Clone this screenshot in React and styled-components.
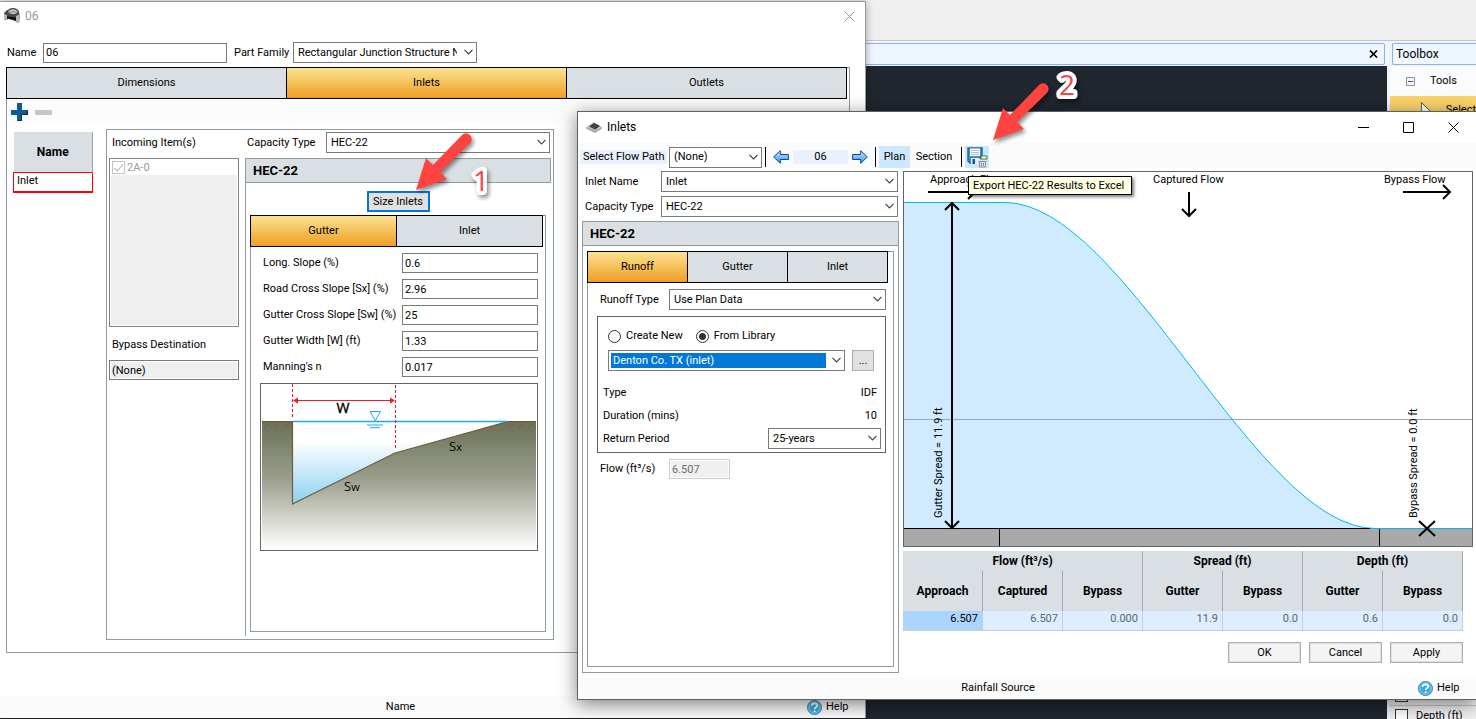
import React from 'react';
import styled, { createGlobalStyle, css } from 'styled-components';

/**
 *  Global
 */
const GlobalStyle = createGlobalStyle`
  * {
    box-sizing: border-box;
  }
  body {
    margin: 0;
    font-family: Roboto, "Liberation Sans", sans-serif;
    font-size: 11px;
    line-height: 16px;
    color: #000;
  }
  button, input, select {
    font: inherit;
    color: inherit;
    margin: 0;
    border-radius: 0;
  }
  p, h1, h2 {
    margin: 0;
    font: inherit;
  }
`;

/**
 *  Application behind the dialogs
 */
const Desktop = styled.div`
  position: relative;
  display: flex;
  flex-direction: column;
  height: 100vh;
  min-height: 700px;
  overflow: hidden;
  background: #eef5fd;
`;

const RibbonEdge = styled.div`
  flex: none;
  height: 41px;
  background: #f0f0f0;
  border-bottom: 1px solid #c8c8c8;
`;

const Workspace = styled.div`
  flex: 1;
  display: flex;
  gap: 3px;
  padding-top: 2px;
`;

const Drawing = styled.div`
  flex: 1;
  display: flex;
  flex-direction: column;
  gap: 1px;
`;

const DocumentTab = styled.div`
  display: flex;
  align-items: center;
  justify-content: flex-end;
  height: 22px;
  margin-right: 2px;
  padding-right: 4px;
  border: 1px solid #8cb2e6;
  border-radius: 2px;
  background: #eef6ff;
`;

const Canvas = styled.div`
  flex: 1;
  background: #20272f;
`;

const Toolbox = styled.aside`
  display: flex;
  flex-direction: column;
  width: 86px;
  background: #f0f0f0;
`;

const ToolboxHeader = styled.h2`
  height: 22px;
  margin: 0 0 1px 2px;
  padding: 2px 3px;
  border: 1px solid #8cb2e6;
  border-right: 0;
  border-radius: 2px 0 0 2px;
  background: #eef6ff;
  font-size: 12px;
`;

const ToolGroup = styled.div`
  display: flex;
  align-items: center;
  gap: 15px;
  height: 30px;
  padding-left: 16px;
  background: #fcfcfc;
`;

const ToolItem = styled.div`
  display: flex;
  gap: 13px;
  height: 30px;
  padding: 4px 0 0 31px;
  background: #fbd56a;
  overflow: hidden;

  span {
    padding-top: 2px;
  }
`;

const PropertyList = styled.div`
  margin: auto 0 -6px;
`;

const PropertyRow = styled.label`
  display: flex;
  align-items: center;
  gap: 8px;
  height: 20px;
  padding-left: 5px;
  border-top: 1px solid #c4c4c4;
  white-space: nowrap;
`;

/**
 *  Windows
 */
const Window = styled.section`
  position: absolute;
  display: flex;
  flex-direction: column;
  background: #fff;
`;

const StructureWindow = styled(Window)`
  top: 1px;
  bottom: 1px;
  left: 0;
  width: 866px;
  border: solid #9a9a9a;
  border-width: 1px 1px 0 0;
  box-shadow: 0 1px 8px rgba(0, 0, 0, 0.35);
`;

const InletWindow = styled(Window)`
  top: 111px;
  left: 577px;
  right: 0;
  border: solid #5f6163;
  border-width: 1px 0 1px 1px;
  box-shadow: 0 4px 18px rgba(0, 0, 0, 0.5);
`;

const TitleBar = styled.header`
  display: flex;
  align-items: center;
  flex: none;
  height: 30px;
  font-size: 12px;

  h1 {
    flex: 1;
    padding-left: 5px;
  }
`;

const StructureTitle = styled(TitleBar)`
  height: 28px;
  padding-left: 4px;
  color: #999;
`;

const InletTitle = styled(TitleBar)`
  padding-left: 8px;
`;

const CaptionButton = styled.button`
  display: grid;
  place-items: center;
  width: ${props => props.$wide ? '45px' : '31px'};
  height: 28px;
  padding: 0;
  border: 0;
  background: none;
`;

const StatusBar = styled.footer`
  display: flex;
  align-items: center;
  flex: none;
  height: 22px;
  background: #fbfbfb;

  p {
    flex: 1;
    text-align: center;
  }
`;

const StructureStatus = styled(StatusBar)`
  p {
    padding-right: 6px;
  }
`;

const HelpLink = styled.a`
  display: flex;
  align-items: center;
  gap: 4px;
  width: 58px;
  color: #000;
  text-decoration: none;
`;

/**
 *  Controls
 */
const TextBox = styled.input`
  width: ${props => props.$width || '100%'};
  height: 20px;
  padding: 0 2px;
  border: 1px solid #7a7a7a;
  background: #fff;

  &:read-only {
    background: #efefef;
    box-shadow: inset 0 0 0 1px #fff;
  }
  &:disabled {
    color: #6d6d6d;
    border-color: #ccc;
    background: #f0f0f0;
  }
`;

const SelectFrame = styled.span`
  position: relative;
  display: block;
  flex: none;
  width: ${props => props.$width};

  svg {
    position: absolute;
    top: 7px;
    right: 4px;
    pointer-events: none;
  }
`;

const NativeSelect = styled.select`
  appearance: none;
  display: block;
  width: 100%;
  height: 21px;
  padding: 0 19px 0 4px;
  border: 1px solid #7a7a7a;
  background: #fff;
  outline: 0;
  ${props => props.$selected && css`
    color: #fff;
    background: linear-gradient(#0078d7, #0078d7) no-repeat 2px 2px / calc(100% - 20px) calc(100% - 4px), #fff;
  `}
`;

const PushButton = styled.button`
  width: 73px;
  height: 21px;
  padding: 0;
  border: 1px solid #adadad;
  background: #f4f4f4;
  box-shadow: inset 0 0 0 1px #e1e1e1;
`;

const SizeButton = styled(PushButton)`
  width: 63px;
  border: 2px solid #0078d7;
  background: #e1e1e1;
`;

const BrowseButton = styled(PushButton)`
  width: 22px;
  background: #e1e1e1;
`;

const Radio = styled.input`
  appearance: none;
  width: 13px;
  height: 13px;
  border: 1px solid #333;
  border-radius: 50%;
  background: #fff;

  &:checked {
    background: radial-gradient(circle, #333 0 3px, #fff 4px);
  }
`;

const CheckBox = styled.input`
  appearance: none;
  display: grid;
  place-items: center;
  width: 13px;
  height: 13px;
  border: 1px solid ${props => props.disabled ? '#c4c4c4' : '#333'};
  background: #fff;

  &:checked:after {
    content: "";
    width: 4px;
    height: 8px;
    margin-top: -2px;
    border: solid #b4b4b4;
    border-width: 0 1px 1px 0;
    transform: rotate(40deg);
  }
`;

/**
 *  Tabbed panels
 */
const TabPanel = styled.div`
  display: flex;
  flex-direction: column;
  flex: 1;
  border: 1px solid #8f9ba3;
`;

const TabStrip = styled.div`
  display: flex;
  flex: none;
  height: 32px;
  margin: -1px ${props => props.$inset} 0 -1px;
  border: 1px solid #000;
`;

const Tab = styled.button`
  flex: 1;
  padding: 0;
  border: 0;
  background: ${props => props['aria-selected'] ? 'linear-gradient(#fbe392, #ef9e22)' : '#d9dfe3'};

  & + & {
    border-left: 1px solid #000;
  }
`;

const GroupHeader = styled.h2`
  flex: none;
  height: 25px;
  padding: 4px 7px;
  border: 1px solid #8f9ba3;
  background: #d9dfe3;
  font-size: 13px;
  font-weight: bold;
`;

/**
 *  Structure window parts
 */
const NameRow = styled.div`
  display: flex;
  align-items: center;
  flex: none;
  margin: 12px 0 4px;
  padding-left: 7px;

  label {
    width: 36px;
  }
  label:nth-of-type(2) {
    width: 66px;
    padding-left: 7px;
  }
`;

const StructurePanel = styled(TabPanel)`
  margin: 0 15px 43px 6px;
`;

const ItemToolbar = styled.div`
  display: flex;
  align-items: center;
  gap: 7px;
  flex: none;
  height: 24px;
  padding: 2px 0 0 4px;
  background: #fcfcfc;

  button {
    display: grid;
    width: 17px;
    padding: 0;
    border: 0;
    background: none;
  }
`;

const StructureBody = styled.div`
  display: flex;
  gap: 13px;
  flex: 1;
  padding: 6px 0 12px 6px;
`;

const InletTable = styled.table`
  align-self: flex-start;
  width: 80px;
  margin-top: 3px;
  border-collapse: collapse;

  th {
    height: 40px;
    padding: 0;
    border-right: 1px solid #a0a0a0;
    background: #d9dfe3;
    font-size: 12px;
  }
  td {
    height: 19px;
    padding: 0 3px 2px;
    border: 1px solid #f00;
    border-bottom-width: 2px;
  }
`;

const CapacityGroup = styled.div`
  display: grid;
  grid-template-columns: 130px 1fr;
  gap: 6px;
  width: 448px;
  padding: 0 3px 3px 2px;
  border: 1px solid #8f9ba3;
`;

const IncomingColumn = styled.div`
  display: flex;
  flex-direction: column;
`;

const ColumnLabel = styled.label`
  height: 24px;
  margin-bottom: 4px;
  padding: 5px 3px;
`;

const ItemList = styled.div`
  height: 169px;
  margin-bottom: 5px;
  padding: 1px;
  border: 1px solid #7f878d;
  background: #efefef;
  box-shadow: inset 0 0 0 1px #fff;

  label {
    display: flex;
    align-items: center;
    gap: 2px;
    height: 15px;
    padding-left: 1px;
    background: #fff;
    color: #999;
  }
`;

const CapacityColumn = styled.div`
  display: flex;
  flex-direction: column;
  padding-top: 2px;
`;

const CapacityRow = styled.div`
  display: flex;
  align-items: center;
  margin-bottom: 5px;
  padding-right: 1px;

  label {
    flex: 1;
    padding-left: 2px;
  }
`;

const Hec22Group = styled.div`
  display: flex;
  flex-direction: column;
  flex: 1;
`;

const Hec22Body = styled.div`
  display: flex;
  flex-direction: column;
  align-items: center;
  gap: 3px;
  flex: 1;
  padding: 8px 5px 4px 4px;
  border-left: 1px solid #8f9ba3;
`;

const GutterPanel = styled(TabPanel)`
  width: 296px;
`;

const FieldList = styled.div`
  display: grid;
  grid-template-columns: 1fr 136px;
  align-items: center;
  gap: 6px 0;
  padding: 6px 7px 6px 12px;
`;

const GutterDiagram = styled.svg`
  display: block;
  flex: none;
  margin: 0 7px 0 9px;
`;

/**
 *  Inlet window parts
 */
const InletToolbar = styled.div`
  display: flex;
  align-items: center;
  flex: none;
  height: 26px;
  padding: 4px 0 0 2px;
  background: #fbfbfb;
`;

const FlowPathLabel = styled.label`
  width: 89px;
  padding-left: 3px;
  background: linear-gradient(#e9f1fc, #e9f1fc) no-repeat 0 1px / 87px 14px;
  white-space: nowrap;
`;

const Divider = styled.span`
  width: 1px;
  height: 20px;
  margin: 0 3px;
  background: #000;
`;

const ToolButton = styled.button`
  display: grid;
  place-items: center;
  width: ${props => props.$width || '24px'};
  height: 22px;
  padding: 0;
  border: 0;
  background: ${props => props.$active ? '#cce8ff' : 'none'};
`;

const Structure = styled.output`
  width: 55px;
  background: linear-gradient(#e9f1fc, #e9f1fc) no-repeat 0 1px / 100% 14px;
  text-align: center;
`;

const ExportSlot = styled.div`
  position: relative;
`;

const Tooltip = styled.div`
  position: absolute;
  top: 30px;
  left: 3px;
  z-index: 1;
  height: 19px;
  padding: 1px 7px 0 4px;
  border: 1px solid #000;
  background: #ffffe1;
  box-shadow: 2px 2px 3px rgba(0, 0, 0, 0.5);
  white-space: nowrap;
`;

const InletBody = styled.div`
  display: grid;
  grid-template-columns: 317px 1fr;
  gap: 4px;
  padding: 3px 3px 4px 4px;
`;

const SettingsColumn = styled.div`
  display: flex;
  flex-direction: column;
`;

const SettingRow = styled.div`
  display: flex;
  align-items: center;
  justify-content: space-between;
  margin-bottom: 4px;
  padding: 0 1px 0 3px;
`;

const SettingGroup = styled.div`
  display: flex;
  flex-direction: column;
  flex: 1;
  border: 1px solid #8f9ba3;

  > h2 {
    height: 24px;
    border-width: 0 0 1px;
  }
`;

const SettingGroupBody = styled.div`
  display: flex;
  flex: 1;
  padding: 5px 4px;
`;

const RunoffForm = styled.div`
  display: flex;
  flex-direction: column;
  gap: 6px;
  padding: 6px 7px 6px 9px;
`;

const RunoffRow = styled.div`
  display: flex;
  align-items: center;

  label {
    width: 72px;
    padding-left: 3px;
  }
`;

const RainfallBox = styled.div`
  border: 1px solid #646464;
  padding: 9px 4px 2px 5px;
`;

const RadioRow = styled.div`
  display: flex;
  gap: 13px;
  height: 20px;
  padding-left: 5px;

  label {
    display: flex;
    align-items: center;
    gap: 5px;
  }
`;

const LibraryRow = styled.div`
  display: flex;
  gap: 7px;
  margin: 4px 0 10px;
  padding-left: 5px;
`;

const InfoRow = styled.div`
  display: flex;
  align-items: center;
  justify-content: space-between;
  height: 23px;

  output {
    padding-right: 4px;
  }
`;

const ResultsColumn = styled.div`
  padding-bottom: 10px;
`;

const PlanChart = styled.svg`
  display: block;
  width: 100%;
  height: auto;
`;

const ResultsFooter = styled.div`
  display: flex;
  flex-direction: column;
  gap: 11px;
  padding: 4px 10px 0 0;
`;

const ResultTable = styled.table`
  width: 100%;
  table-layout: fixed;
  border-collapse: separate;
  border-spacing: 0;

  th {
    height: 40px;
    padding: 0;
    border-right: 1px solid #a6a6a6;
    background: #d9dfe3;
    font-size: 12px;
  }
  th[colspan] {
    height: 20px;
  }
  td {
    height: 20px;
    padding: 0 4px 3px;
    border: solid #c0d0e2;
    border-width: 0 1px 1px 0;
    background: #deedff;
    color: #5d6670;
    text-align: right;
  }
  td:first-child {
    background: #abd4ff;
    color: #000;
  }
`;

const ButtonRow = styled.div`
  display: flex;
  justify-content: flex-end;
  gap: 8px;
`;

/**
 *  Numbered callouts
 */
const Callout = styled.svg`
  position: absolute;
  top: ${props => props.$top};
  left: ${props => props.$left};
  overflow: visible;
  pointer-events: none;
  filter: drop-shadow(2px 3px 2px rgba(0, 0, 0, 0.45));

  text {
    font: 28px "Open Sans", sans-serif;
    fill: #fe4340;
    stroke: #fff;
    stroke-width: 8px;
    stroke-linejoin: round;
    paint-order: stroke;
  }
`;

const CalloutMark = ({ number, top, left, textX, textY }) => (
  <Callout width="80" height="70" $top={top} $left={left}>
    <path d="M0 57 10 25 17 32 46 2a5 5 0 0 1 8 8L24 39l7 7z" fill="#fe4340" />
    <text x={textX} y={textY}>{number}</text>
  </Callout>
);

const Select = ({ id, value, width, selected, label }) => (
  <SelectFrame $width={width}>
    <NativeSelect id={id} $selected={selected} aria-label={label}>
      <option>{value}</option>
    </NativeSelect>
    <svg width="9" height="6" viewBox="0 0 9 6">
      <path d="M0.5 0.8 4.5 4.8 8.5 0.8" fill="none" stroke="#444" strokeWidth="1.2" />
    </svg>
  </SelectFrame>
);

const Tabs = ({ items, active, inset }) => (
  <TabStrip role="tablist" $inset={inset}>
    {items.map(item => (
      <Tab key={item} role="tab" aria-selected={item === active}>{item}</Tab>
    ))}
  </TabStrip>
);

const CloseIcon = ({ color = '#000' }) => (
  <svg width="11" height="11" viewBox="0 0 11 11">
    <path d="M0.5 0.5l10 10M10.5 0.5l-10 10" stroke={color} />
  </svg>
);

const ArrowIcon = ({ flip, id }) => (
  <svg width="16" height="14" viewBox="0 0 16 14">
    <defs>
      <linearGradient id={id} x1="0" y1="0" x2="0" y2="1">
        <stop offset="0" stopColor="#cdeaff" />
        <stop offset="1" stopColor="#2f8fff" />
      </linearGradient>
    </defs>
    <path
      d="M0.7 7 7.3 0.7V4.5H15.4V9.5H7.3V13.3Z"
      fill={`url(#${id})`}
      stroke="#0a4a90"
      transform={flip ? 'translate(16 0) scale(-1 1)' : undefined}
    />
  </svg>
);

const HelpIcon = () => (
  <svg width="15" height="15" viewBox="0 0 15 15">
    <circle cx="7.5" cy="7.5" r="7" fill="#3fa9dd" stroke="#3b86b5" />
    <circle cx="7.5" cy="7.5" r="5.6" fill="none" stroke="#8fd3f2" />
    <path d="M4.8 5.8c0-3.2 5.6-3.1 5.4-.2-.1 1.7-2.5 1.5-2.5 3.4" fill="none" stroke="#fff" strokeWidth="1.8" />
    <circle cx="7.7" cy="11.2" r="1" fill="#fff" />
  </svg>
);

const StructureIcon = () => (
  <svg width="16" height="16" viewBox="0 0 16 16">
    <path d="M0 5 3 2 14 3 16 7 15 15 11 13 5 11 0 12z" fill="#4a4a4a" />
    <path d="M0 6 3 7v4L0 12zM12 8l4-2-1 9-3-2z" fill="#b5b5b5" />
    <path d="M3 8.5l9 1v3L5 10.500H3z" fill="#0c0c0c" />
    <ellipse cx="9" cy="3.8" rx="5.5" ry="3.2" fill="#8c8c8c" stroke="#3a3a3a" />
    <path d="M5.500 3.500q3.500-3 7 0M7 5h4.500" fill="none" stroke="#e4e4e4" />
  </svg>
);

const GrateIcon = () => (
  <svg width="16" height="12" viewBox="0 0 16 12">
    <path d="M0 6 8 1 16 6 9 11z" fill="#c9c9c9" />
    <path d="M0 6 9 9.500 16 6v1.500L9 12 0 7.500z" fill="#a5a5a5" />
    <path d="M3 5.500 8 2l6 3-5 3.500z" fill="#333" />
    <path d="M5 5l4 2.200M7 3.600l4 2.200" stroke="#777" strokeWidth="0.600" />
  </svg>
);

const ExportIcon = () => (
  <svg width="21" height="21" viewBox="0 0 21 21">
    <path d="M1 1H15V16H3L1 14Z" fill="#3b8ed0" stroke="#2469a6" strokeWidth="1.500" />
    <path d="M3 1.500h10V9H3z" fill="#fff" />
    <path d="M4 3.500h8M4 5.500h8M4 7.500h8" stroke="#b4bbc0" />
    <path d="M4 11h7v6H4z" fill="#e7eef4" />
    <path d="M5.500 12H8v5H5.500z" fill="#1d4f80" />
    <path d="M11 10h10v11H11z" fill="#cce8ff" />
    <path d="M14 9h6v3h-6z" fill="#fff" stroke="#41752e" />
    <path d="M11 10.500l3-2v4z" fill="#41752e" />
    <path d="M11.500 14.500h8M12.500 15v5h6v-5M14.500 16v3M16.500 16v3" fill="none" stroke="#8a9094" />
  </svg>
);

const GutterSection = () => (
  <GutterDiagram width="278" height="168" viewBox="0 0 278 168">
    <defs>
      <linearGradient id="soil" x1="0" y1="0" x2="0" y2="1">
        <stop offset="0" stopColor="#6a7156" />
        <stop offset="0.45" stopColor="#9a9e8b" />
        <stop offset="1" stopColor="#fff" />
      </linearGradient>
      <linearGradient id="water" gradientUnits="userSpaceOnUse" x1="0" y1="58" x2="0" y2="118">
        <stop offset="0" stopColor="#fff" />
        <stop offset="1" stopColor="#8fd4f2" />
      </linearGradient>
    </defs>
    <rect x="0.5" y="0.5" width="277" height="167" fill="#fff" stroke="#646464" />
    <path d="M2 38H33V121L135 70 248 38H276V166H2Z" fill="url(#soil)" />
    <path d="M33 38H248L135 70 33 121Z" fill="url(#water)" />
    <path d="M2 38.500H32.500V121L135 70 248 38.500H276" fill="none" stroke="#705a3b" strokeWidth="1.200" />
    <path d="M4 45l7-6M14 45l7-6M24 45l7-6M249 45l7-6M259 45l7-6M268 45l7-6" stroke="#8a5a32" />
    <path d="M33 38.500H247" stroke="#1fa9e1" strokeWidth="1.500" />
    <path d="M110 28.500h10.500l-5.200 9z" fill="#fff" stroke="#1fa9e1" />
    <path d="M107 42h16M110 44.700h10" stroke="#1fa9e1" />
    <path d="M32.500 1V34M135.500 2V66" stroke="#ec1c24" strokeDasharray="3 2" />
    <path d="M35 17.500H133" stroke="#ec1c24" />
    <path d="M33 17.500l5-3v6zM135 17.500l-5-3v6z" fill="#ec1c24" />
    <g fontFamily="Open Sans, sans-serif">
      <text x="83" y="30" fontSize="14" textAnchor="middle" stroke="#000" strokeWidth="0.400">W</text>
      <text x="84" y="108" fontSize="13">S<tspan fontSize="11">w</tspan></text>
      <text x="189" y="68" fontSize="13">S<tspan fontSize="11">x</tspan></text>
    </g>
  </GutterDiagram>
);

const FlowPlan = () => (
  <PlanChart viewBox="0 0 570 376">
    <rect x="0.5" y="0.5" width="569" height="375" fill="#fff" stroke="#646464" />
    <path d="M1 31.500H102C221 31.500 353 357.500 472 357.500H1Z" fill="#d0ebff" />
    <path d="M1 248.500H569" stroke="#a0a6aa" />
    <path d="M1 31.500H102C221 31.500 353 357.500 472 357.500H569" fill="none" stroke="#00b7f1" />
    <path d="M1 358h568v17H1z" fill="#a9a9a9" />
    <path d="M1 357.500H467M96.500 358v17M476.500 358v17" stroke="#000" />
    <path d="M467 357.500H569" stroke="#00b7f1" />
    <g fill="none" stroke="#000" strokeWidth="2">
      <path d="M49 32V357M42 39l7-7 7 7M42 350l7 7 7-7" />
      <path d="M25 21H72M65 14l7 7-7 7" />
      <path d="M286 21V45M279 38l7 7 7-7" />
      <path d="M500 21H547M540 14l7 7-7 7" />
      <path d="M516 350l16 15M532 350l-16 15" />
    </g>
    <g fontSize="11">
      <text x="27" y="12">Approach Flow</text>
      <text x="250" y="12">Captured Flow</text>
      <text x="481" y="12">Bypass Flow</text>
      <text transform="translate(39 347) rotate(-90)">Gutter Spread = 11.9 ft</text>
      <text transform="translate(514 347) rotate(-90)">Bypass Spread = 0.0 ft</text>
    </g>
  </PlanChart>
);

const gutterFields = [
  { id: 'longSlope', label: 'Long. Slope (%)', value: '0.6' },
  { id: 'roadSlope', label: 'Road Cross Slope [Sx] (%)', value: '2.96' },
  { id: 'gutterSlope', label: 'Gutter Cross Slope [Sw] (%)', value: '25' },
  { id: 'gutterWidth', label: 'Gutter Width [W] (ft)', value: '1.33' },
  { id: 'manning', label: "Manning's n", value: '0.017' },
];

const resultColumns = ['Approach', 'Captured', 'Bypass', 'Gutter', 'Bypass', 'Gutter', 'Bypass'];
const resultValues = ['6.507', '6.507', '0.000', '11.9', '0.0', '0.6', '0.0'];

const StructureDialog = () => (
  <StructureWindow>
    <StructureTitle>
      <StructureIcon />
      <h1>06</h1>
      <CaptionButton aria-label="Close"><CloseIcon color="#999" /></CaptionButton>
    </StructureTitle>
    <NameRow>
      <label htmlFor="structureName">Name</label>
      <TextBox id="structureName" $width="184px" defaultValue="06" />
      <label htmlFor="partFamily">Part Family</label>
      <Select id="partFamily" width="184px" value="Rectangular Junction Structure NF" />
    </NameRow>
    <StructurePanel>
      <Tabs items={['Dimensions', 'Inlets', 'Outlets']} active="Inlets" inset="2px" />
      <ItemToolbar>
        <button aria-label="Add inlet">
          <svg width="17" height="18" viewBox="0 0 17 18">
            <path d="M6 0h5v7h6v5h-6v6H6v-6H0V7h6z" fill="#0e5a96" />
            <path d="M16.500 8v3.500H11M10.500 12v5.500H7" fill="none" stroke="#0a2d4d" />
          </svg>
        </button>
        <button aria-label="Remove inlet">
          <svg width="17" height="5" viewBox="0 0 17 5"><path d="M0 0h17v5H0z" fill="#c6c6c6" /></svg>
        </button>
      </ItemToolbar>
      <StructureBody>
        <InletTable>
          <thead><tr><th>Name</th></tr></thead>
          <tbody><tr><td>Inlet</td></tr></tbody>
        </InletTable>
        <CapacityGroup>
          <IncomingColumn>
            <ColumnLabel as="p">Incoming Item(s)</ColumnLabel>
            <ItemList>
              <label><CheckBox type="checkbox" defaultChecked disabled />2A-0</label>
            </ItemList>
            <ColumnLabel htmlFor="bypassDestination">Bypass Destination</ColumnLabel>
            <TextBox id="bypassDestination" defaultValue="(None)" readOnly />
          </IncomingColumn>
          <CapacityColumn>
            <CapacityRow>
              <label htmlFor="capacityType">Capacity Type</label>
              <Select id="capacityType" width="224px" value="HEC-22" />
            </CapacityRow>
            <Hec22Group>
              <GroupHeader>HEC-22</GroupHeader>
              <Hec22Body>
                <SizeButton>Size Inlets</SizeButton>
                <GutterPanel>
                  <Tabs items={['Gutter', 'Inlet']} active="Gutter" inset="2px" />
                  <FieldList>
                    {gutterFields.map(field => (
                      <React.Fragment key={field.id}>
                        <label htmlFor={field.id}>{field.label}</label>
                        <TextBox id={field.id} defaultValue={field.value} />
                      </React.Fragment>
                    ))}
                  </FieldList>
                  <GutterSection />
                </GutterPanel>
              </Hec22Body>
            </Hec22Group>
          </CapacityColumn>
        </CapacityGroup>
      </StructureBody>
    </StructurePanel>
    <StructureStatus>
      <p>Name</p>
      <HelpLink href="#help"><HelpIcon />Help</HelpLink>
    </StructureStatus>
  </StructureWindow>
);

const InletDialog = () => (
  <InletWindow>
    <InletTitle>
      <GrateIcon />
      <h1>Inlets</h1>
      <CaptionButton $wide aria-label="Minimize">
        <svg width="11" height="11"><path d="M0 5.500h11" stroke="#000" /></svg>
      </CaptionButton>
      <CaptionButton $wide aria-label="Maximize">
        <svg width="11" height="11"><path d="M0.500 0.500h10v10h-10z" fill="none" stroke="#000" /></svg>
      </CaptionButton>
      <CaptionButton $wide aria-label="Close"><CloseIcon /></CaptionButton>
    </InletTitle>
    <InletToolbar>
      <FlowPathLabel htmlFor="flowPath">Select Flow Path</FlowPathLabel>
      <Select id="flowPath" width="93px" value="(None)" />
      <Divider />
      <ToolButton aria-label="Previous structure"><ArrowIcon id="arrowPrev" /></ToolButton>
      <Structure>06</Structure>
      <ToolButton aria-label="Next structure"><ArrowIcon id="arrowNext" flip /></ToolButton>
      <Divider />
      <ToolButton $active $width="31px">Plan</ToolButton>
      <ToolButton $width="48px">Section</ToolButton>
      <Divider />
      <ExportSlot>
        <ToolButton $active aria-label="Export"><ExportIcon /></ToolButton>
        <Tooltip role="tooltip">Export HEC-22 Results to Excel</Tooltip>
      </ExportSlot>
    </InletToolbar>
    <InletBody>
      <SettingsColumn>
        <SettingRow>
          <label htmlFor="inletName">Inlet Name</label>
          <Select id="inletName" width="237px" value="Inlet" />
        </SettingRow>
        <SettingRow>
          <label htmlFor="inletCapacity">Capacity Type</label>
          <Select id="inletCapacity" width="237px" value="HEC-22" />
        </SettingRow>
        <SettingGroup>
          <GroupHeader>HEC-22</GroupHeader>
          <SettingGroupBody>
            <TabPanel>
              <Tabs items={['Runoff', 'Gutter', 'Inlet']} active="Runoff" inset="5px" />
              <RunoffForm>
                <RunoffRow>
                  <label htmlFor="runoffType">Runoff Type</label>
                  <Select id="runoffType" width="217px" value="Use Plan Data" />
                </RunoffRow>
                <RainfallBox>
                  <RadioRow>
                    <label><Radio type="radio" name="rainfall" />Create New</label>
                    <label><Radio type="radio" name="rainfall" defaultChecked />From Library</label>
                  </RadioRow>
                  <LibraryRow>
                    <Select width="237px" value="Denton Co. TX (inlet)" label="Rainfall library" selected />
                    <BrowseButton aria-label="Browse library">...</BrowseButton>
                  </LibraryRow>
                  <InfoRow>Type<output>IDF</output></InfoRow>
                  <InfoRow>Duration (mins)<output>10</output></InfoRow>
                  <InfoRow>
                    <label htmlFor="returnPeriod">Return Period</label>
                    <Select id="returnPeriod" width="113px" value="25-years" />
                  </InfoRow>
                </RainfallBox>
                <RunoffRow>
                  <label htmlFor="flow">Flow (ft³/s)</label>
                  <TextBox id="flow" $width="61px" defaultValue="6.507" disabled />
                </RunoffRow>
              </RunoffForm>
            </TabPanel>
          </SettingGroupBody>
        </SettingGroup>
      </SettingsColumn>
      <ResultsColumn>
        <FlowPlan />
        <ResultsFooter>
          <ResultTable>
            <thead>
              <tr>
                <th colSpan="3">Flow (ft³/s)</th>
                <th colSpan="2">Spread (ft)</th>
                <th colSpan="2">Depth (ft)</th>
              </tr>
              <tr>{resultColumns.map((name, i) => <th key={i}>{name}</th>)}</tr>
            </thead>
            <tbody>
              <tr>{resultValues.map((value, i) => <td key={i}>{value}</td>)}</tr>
            </tbody>
          </ResultTable>
          <ButtonRow>
            <PushButton>OK</PushButton>
            <PushButton>Cancel</PushButton>
            <PushButton>Apply</PushButton>
          </ButtonRow>
        </ResultsFooter>
      </ResultsColumn>
    </InletBody>
    <StatusBar>
      <p>Rainfall Source</p>
      <HelpLink href="#help"><HelpIcon />Help</HelpLink>
    </StatusBar>
  </InletWindow>
);

const App = () => (
  <>
    <GlobalStyle />
    <Desktop>
      <RibbonEdge />
      <Workspace>
        <Drawing>
          <DocumentTab>
            <svg width="12" height="8" viewBox="0 0 12 8">
              <path d="M2 0.500l7 7M9 0.500l-7 7" stroke="#000" strokeWidth="1.700" />
            </svg>
          </DocumentTab>
          <Canvas />
        </Drawing>
        <Toolbox>
          <ToolboxHeader>Toolbox</ToolboxHeader>
          <ToolGroup>
            <svg width="9" height="9" viewBox="0 0 9 9">
              <path d="M0.500 0.500h8v8h-8z" fill="#f4f4f4" stroke="#919191" />
              <path d="M2 4.500h5" stroke="#3355bb" />
            </svg>
            Tools
          </ToolGroup>
          <ToolItem>
            <svg width="15" height="20" viewBox="0 0 15 20">
              <path d="M0.500 0.500V19L5 14.500 14 13.500Z" fill="#fff" stroke="#222" />
            </svg>
            <span>Select</span>
          </ToolItem>
          <PropertyList>
            <PropertyRow><CheckBox type="checkbox" aria-label="Property" /></PropertyRow>
            <PropertyRow><CheckBox type="checkbox" />Depth (ft)</PropertyRow>
          </PropertyList>
        </Toolbox>
      </Workspace>
      <StructureDialog />
      <InletDialog />
      <CalloutMark number="1" left="416px" top="133px" textX="57" textY="58" />
      <CalloutMark number="2" left="993px" top="83px" textX="66" textY="12" />
    </Desktop>
  </>
);

export default App;
